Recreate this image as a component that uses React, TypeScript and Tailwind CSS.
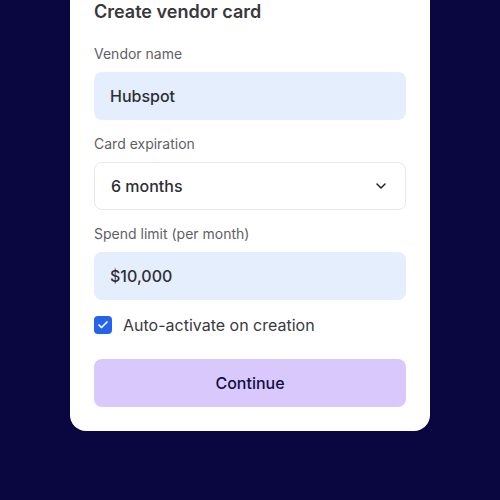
import { Check, ChevronDown } from "lucide-react";

const font = { fontFamily: "Inter, 'Noto Sans', sans-serif" };

function Label({ children }: { children: React.ReactNode }) {
  return <div className="mb-2 text-[14px] leading-5 text-[#5f5f66]">{children}</div>;
}

export default function App() {
  return (
    <div className="flex h-[500px] w-[500px] justify-center overflow-hidden bg-[#0a0640]" style={font}>
      <div className="-mt-[24px] h-fit w-[360px] rounded-[16px] bg-white px-6 pb-6 pt-[22px]">
        <h1 className="text-[18px] font-semibold leading-7 text-[#38383d]">Create vendor card</h1>

        <div className="mt-[18px]">
          <Label>Vendor name</Label>
          <div className="flex h-12 items-center rounded-lg bg-[#e5eefc] px-4 text-[16px] font-medium text-[#2e2e33]">
            Hubspot
          </div>
        </div>

        <div className="mt-[14px]">
          <Label>Card expiration</Label>
          <div className="flex h-12 items-center justify-between rounded-lg border border-[#e8e8ec] bg-white px-4 text-[16px] font-medium text-[#2e2e33]">
            <span>6 months</span>
            <ChevronDown className="h-4 w-4 text-[#222]" strokeWidth={2.25} />
          </div>
        </div>

        <div className="mt-[14px]">
          <Label>Spend limit (per month)</Label>
          <div className="flex h-12 items-center rounded-lg bg-[#e5eefc] px-4 text-[16px] font-medium text-[#2e2e33]">
            $10,000
          </div>
        </div>

        <div className="mt-[13px] flex items-center gap-[11px]">
          <div className="flex h-[18px] w-[18px] items-center justify-center rounded-[4px] bg-[#2563eb]">
            <Check className="h-3 w-3 text-white" strokeWidth={3.5} />
          </div>
          <span className="text-[16px] text-[#3a3a40]">Auto-activate on creation</span>
        </div>

        <button className="mt-[22px] flex h-12 w-full items-center justify-center rounded-lg bg-[#d9c8fc] text-[16px] font-medium text-[#130d44]">
          Continue
        </button>
      </div>
    </div>
  );
}
